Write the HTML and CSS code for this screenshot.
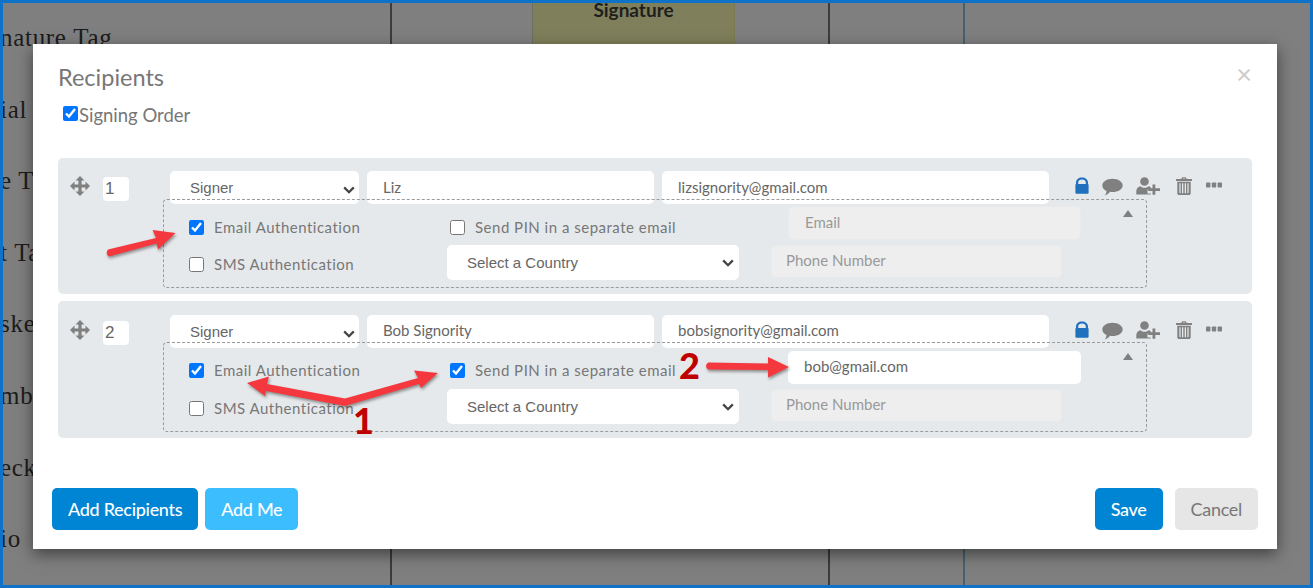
FILE: index.html
```html
<!DOCTYPE html>
<html lang="en">
<head>
<meta charset="utf-8">
<title>Recipients</title>
<link rel="stylesheet" href="styles.css">
</head>
<body>
<svg class="defs" width="0" height="0" aria-hidden="true">
  <symbol id="i-move" viewBox="0 0 20 20"><path d="M10 0l4.500 4.500h-2.900v3.900h3.900V5.500L20 10l-4.500 4.500v-2.900h-3.900v3.900h2.900L10 20l-4.500-4.500h2.900v-3.900H4.500v2.900L0 10l4.500-4.500v2.900h3.900V4.500H5.500z"/></symbol>
  <symbol id="i-lock" viewBox="0 0 14 17"><path d="M1 7.200V5.400C1 2.500 3.600.4 7 .4s6 2.100 6 5v1.800h-2.200V5.600C10.800 3.700 9.200 2.500 7 2.500S3.200 3.700 3.200 5.600v1.600z"/><rect x=".4" y="7" width="13.200" height="9.800" rx="1"/></symbol>
  <symbol id="i-chat" viewBox="0 0 21 18"><path d="M10.500.8C16.100.8 20.700 3.700 20.700 7.400S16.100 14 10.500 14c-.7 0-1.500 0-2.200-.2C7 15.200 4.900 17 2.700 17.500c1-1.200 1.700-2.800 1.800-4.500C2 11.800.3 9.800.3 7.400.3 3.700 4.900.8 10.500.8z"/></symbol>
  <symbol id="i-user" viewBox="0 0 24 18"><circle cx="8.500" cy="4.500" r="4.300"/><path d="M.3 17.600v-3.400c0-2.700 2-4.700 4.300-5 1 1 2.400 1.500 3.900 1.500 1.500 0 2.900-.5 3.900-1.500.9.100 1.700.5 2.400 1v2.300h-3.300v4h3.300v1.100z"/><path d="M16.500 7.500h2.800v3.700H24v2.800h-4.700v3.700h-2.800V14h-4.300v-2.800h4.300z"/></symbol>
  <symbol id="i-trash" viewBox="0 0 16 18"><path d="M5.200 2.100C5.400.8 6.300.2 7.300.2h1.400c1 0 1.900.6 2.100 1.900H15.500c.3 0 .5.200.5.500V4H0V2.600c0-.3.200-.5.500-.5zM6.500 2.100h3c-.1-.4-.4-.7-.8-.7H7.300c-.4 0-.7.300-.8.700z"/><path fill-rule="evenodd" d="M1.300 4.700h13.400v11.500c0 1-.7 1.800-1.700 1.800H3c-1 0-1.700-.8-1.700-1.800zM3.400 6.300v9.500c0 .3.200.5.500.5h.7V6.300zM6 6.300v10h1.300v-10zM8.700 6.300v10H10v-10zM11.400 6.300v10h.7c.3 0 .5-.2.500-.5V6.300z"/></symbol>
  <symbol id="i-dots" viewBox="0 0 16 6"><rect x="0" y=".5" width="4.400" height="5" rx=".8"/><rect x="5.800" y=".5" width="4.400" height="5" rx=".8"/><rect x="11.600" y=".5" width="4.400" height="5" rx=".8"/></symbol>
  <symbol id="i-chev" viewBox="0 0 12 8"><path d="M1.200 1.400L6 6.200l4.800-4.800" fill="none" stroke="#444" stroke-width="2.300"/></symbol>
</svg>

<div class="backdrop">
  <div class="col col-tags">
    <span>nature Tag</span><span>ial Tag</span><span>e Tag</span><span>t Tag</span><span>sked</span><span>mber</span><span>ecklist</span><span>io</span>
  </div>
  <div class="col col-a"></div>
  <div class="col col-sig">Signature</div>
  <div class="col col-b"></div>
  <div class="col col-c"></div>
  <div class="col col-d"></div>
</div>

<section class="modal">
  <header class="modal-head">
    <h1 class="modal-title">Recipients</h1>
    <span class="modal-close">×</span>
  </header>
  <label class="order"><input type="checkbox" checked>Signing Order</label>

  <div class="rows">
    <article class="row">
      <div class="row-main">
        <svg class="ico ico-move"><use href="#i-move"/></svg>
        <input class="num" value="1">
        <span class="sel-wrap wrap-role"><select class="field sel"><option>Signer</option></select><svg class="chev"><use href="#i-chev"/></svg></span>
        <input class="field inp-name" value="Liz">
        <input class="field inp-mail" value="lizsignority@gmail.com">
        <div class="tools">
          <svg class="ico ico-lock"><use href="#i-lock"/></svg>
          <svg class="ico ico-chat"><use href="#i-chat"/></svg>
          <svg class="ico ico-user"><use href="#i-user"/></svg>
          <svg class="ico ico-trash"><use href="#i-trash"/></svg>
          <svg class="ico ico-dots"><use href="#i-dots"/></svg>
        </div>
      </div>
      <div class="auth">
        <div class="auth-line">
          <label class="check check-a"><input type="checkbox" checked>Email Authentication</label>
          <label class="check check-b"><input type="checkbox">Send PIN in a separate email</label>
          <input class="field pin-mail" placeholder="Email" disabled>
          <span class="caret"></span>
        </div>
        <div class="auth-line">
          <label class="check check-a"><input type="checkbox">SMS Authentication</label>
          <span class="sel-wrap wrap-country"><select class="field sel"><option>Select a Country</option></select><svg class="chev"><use href="#i-chev"/></svg></span>
          <input class="field phone" placeholder="Phone Number" disabled>
        </div>
      </div>
    </article>

    <article class="row">
      <div class="row-main">
        <svg class="ico ico-move"><use href="#i-move"/></svg>
        <input class="num" value="2">
        <span class="sel-wrap wrap-role"><select class="field sel"><option>Signer</option></select><svg class="chev"><use href="#i-chev"/></svg></span>
        <input class="field inp-name" value="Bob Signority">
        <input class="field inp-mail" value="bobsignority@gmail.com">
        <div class="tools">
          <svg class="ico ico-lock"><use href="#i-lock"/></svg>
          <svg class="ico ico-chat"><use href="#i-chat"/></svg>
          <svg class="ico ico-user"><use href="#i-user"/></svg>
          <svg class="ico ico-trash"><use href="#i-trash"/></svg>
          <svg class="ico ico-dots"><use href="#i-dots"/></svg>
        </div>
      </div>
      <div class="auth">
        <div class="auth-line">
          <label class="check check-a"><input type="checkbox" checked>Email Authentication</label>
          <label class="check check-b"><input type="checkbox" checked>Send PIN in a separate email</label>
          <input class="field pin-mail pin-live" value="bob@gmail.com">
          <span class="caret"></span>
        </div>
        <div class="auth-line">
          <label class="check check-a"><input type="checkbox">SMS Authentication</label>
          <span class="sel-wrap wrap-country"><select class="field sel"><option>Select a Country</option></select><svg class="chev"><use href="#i-chev"/></svg></span>
          <input class="field phone" placeholder="Phone Number" disabled>
        </div>
      </div>
    </article>
  </div>

  <footer class="modal-foot">
    <button class="btn btn-primary">Add Recipients</button>
    <button class="btn btn-light">Add Me</button>
    <span class="spacer"></span>
    <button class="btn btn-primary">Save</button>
    <button class="btn btn-cancel">Cancel</button>
  </footer>
</section>

<svg class="marks" viewBox="0 0 1313 588" aria-hidden="true">
  <path d="M108 249.500L156 238 152.500 230 175.500 233 158 249.500 156.500 243.500 109 256.500Q105 254 108 249.500z"/>
  <path d="M247 383L269 376.500 267 384 345 398.500 418 378 414 370.500 438 373 421 388 419 384 345 406 266 391 265 396z"/>
  <path d="M708 362.500L768 363.500V357L789 367 768 377.500V370L708 369.500Q704 366 708 362.500z"/>
</svg>
<span class="num-mark num-1">1</span>
<span class="num-mark num-2">2</span>
</body>
</html>
```

FILE: styles.css
```css
* { box-sizing: border-box; }
html, body { margin: 0; height: 100%; }
body {
  position: relative;
  width: 1313px;
  height: 588px;
  overflow: hidden;
  border: 3px solid #0f72c9;
  background: #7f7f7f;
  font-family: Lato, "Liberation Sans", sans-serif;
}
.defs { position: absolute; }

/* dimmed document behind the dialog */
.backdrop {
  display: grid;
  grid-template-columns: 387px 142px 203px 93px 135px 1fr;
  width: 1307px;
  height: 582px;
}
.col { min-width: 0; }
.col-tags {
  display: flex;
  flex-direction: column;
  padding-top: 22px;
  overflow: hidden;
  font: 25px/1 "Liberation Serif", serif;
  color: #1c1c1c;
}
.col-tags span { flex: none; height: 71.600px; white-space: nowrap; margin-left: -3px; letter-spacing: .7px; }
.col-a { border-left: 2px solid #3c3c3c; }
.col-sig {
  align-self: start;
  height: 100px;
  background: #7f7f5b;
  border-left: 1px solid #6e6e62;
  border-right: 1px solid #7a7a4e;
  text-align: center;
  font-weight: 700;
  font-size: 19px;
  line-height: 14px;
  color: #1f1f1f;
}
.col-c { border-left: 2px solid #3c3c3c; }
.col-d { border-left: 2px solid #47626f; }

/* dialog */
.modal {
  position: absolute;
  left: 30px;
  top: 41px;
  width: 1244px;
  height: 505px;
  display: flex;
  flex-direction: column;
  background: #fff;
  box-shadow: 0 5px 15px rgba(0, 0, 0, .5);
  padding: 0 19px 19px 19px;
}
.modal-head {
  display: flex;
  justify-content: space-between;
  padding: 19px 6px 0 6px;
  height: 59px;
}
.modal-title { margin: 0; font-weight: 400; font-size: 23.500px; line-height: 28px; color: #777; }
.modal-close { font-size: 27px; line-height: 21px; color: #ccc; }
.order {
  display: flex;
  align-items: center;
  height: 24px;
  margin-left: 11px;
  font-size: 18.500px;
  color: #777;
}
.order input { width: 15px; height: 15px; margin: 0 1px 0 0; position: relative; top: -1.500px; }

.rows {
  display: flex;
  flex-direction: column;
  gap: 6.900px;
  margin: 30.700px 6px 0 6px;
}
.row {
  height: 136.700px;
  padding: 13.700px 0 0 12px;
  background: #e6e9eb;
  border-radius: 5px;
}
.row-main { display: flex; align-items: flex-start; height: 33px; }
.ico { display: block; fill: #808080; flex: none; }
.ico-move { width: 20px; height: 20px; margin: 5px 13px 0 0; }
.num {
  width: 26px;
  height: 24px;
  margin: 6px 41px 0 0;
  padding: 0 0 0 2px;
  border: 0;
  border-radius: 4px;
  background: #fff;
  font: 17px "Liberation Sans", sans-serif;
  color: #666;
}
.field {
  height: 33px;
  border: 0;
  border-radius: 5px;
  background: #fff;
  font: 15px Lato, sans-serif;
  color: #666;
  padding: 0 16px 2px;
  outline: 0;
}
.sel-wrap { position: relative; display: block; flex: none; }
.sel {
  display: block;
  width: 100%;
  height: 100%;
  appearance: none;
  padding: 0 0 0 20px;
  font: 15px "Liberation Sans", sans-serif;
}
.chev { position: absolute; width: 12px; height: 8px; right: 4px; top: 15px; pointer-events: none; }
.wrap-role { width: 189px; height: 33px; margin-right: 8px; }
.wrap-country { width: 292px; height: 35px; margin-right: 32px; }
.wrap-country .chev { right: 5px; top: 14px; }
.inp-name { width: 287px; margin-right: 8px; }
.inp-mail { width: 387px; }
.tools { display: flex; align-items: flex-start; margin: 6px 0 0 26px; }
.ico-lock { width: 14px; height: 17px; fill: #1f70bd; margin: 0 13px 0 0; }
.ico-chat { width: 21px; height: 18px; margin: 1px 13px 0 0; }
.ico-user { width: 24px; height: 18px; margin: 0 16px 0 0; }
.ico-trash { width: 16px; height: 18px; margin: 0 14px 0 0; }
.ico-dots { width: 16px; height: 6px; margin: 5px 0 0 0; }

.auth {
  position: relative;
  width: 984px;
  height: 89.500px;
  margin: -5.700px 0 0 93px;
  padding: 6.500px 0 0 25px;
  border: 1px dashed #9a9a9a;
  border-radius: 4px;
}
.auth-line { display: flex; align-items: center; height: 34px; }
.auth-line + .auth-line { margin-top: 5px; height: 35px; }
.check {
  display: flex;
  align-items: center;
  margin-top: 7px;
  font-size: 15px;
  letter-spacing: .5px;
  color: #777;
}
.auth-line + .auth-line .check { margin-top: 3px; }
.check input { width: 15px; height: 15px; margin: 0 10px 0 0; flex: none; position: relative; top: .5px; }
.check-a { width: 258px; }
.check-b { width: 338px; margin-left: 3px; }
.pin-mail { width: 293px; height: 34px; padding: 0 15px 2px 16px; }
.pin-live { height: 33px; margin-top: 2px; padding-bottom: 4px; }
.phone { width: 291px; align-self: flex-start; padding: 0 14px 3px; }
.field:disabled { background: #eee; border: 1px solid #e9eaeb; }
.field::placeholder { color: #999; opacity: 1; }
.caret {
  margin: -20px 0 0 42px;
  border: solid transparent;
  border-width: 0 5.500px 7px;
  border-bottom-color: #808080;
}

.modal-foot { display: flex; gap: 7px; margin-top: auto; }
.spacer { flex: 1; }
.btn {
  height: 42px;
  padding: 0 16px;
  border: 0;
  border-radius: 5px;
  font: 500 18px Lato, sans-serif;
  letter-spacing: -.3px;
  color: #fff;
}
.btn-primary { background: #0085d4; }
.btn-light { background: #3bbdfe; }
.btn-cancel { background: #e6e6e6; color: #777; margin-left: 5px; font-weight: 400; }

/* annotations */
.marks {
  position: absolute;
  left: -3px;
  top: -3px;
  width: 1313px;
  height: 588px;
  pointer-events: none;
  fill: #f5383e;
  filter: drop-shadow(1px 2px 1.500px rgba(0, 0, 0, .4));
}
.num-mark { position: absolute; font-weight: 900; font-size: 36px; line-height: 36px; color: #c00000; }
.num-1 { left: 350px; top: 399px; }
.num-2 { left: 676px; top: 344px; }
```
